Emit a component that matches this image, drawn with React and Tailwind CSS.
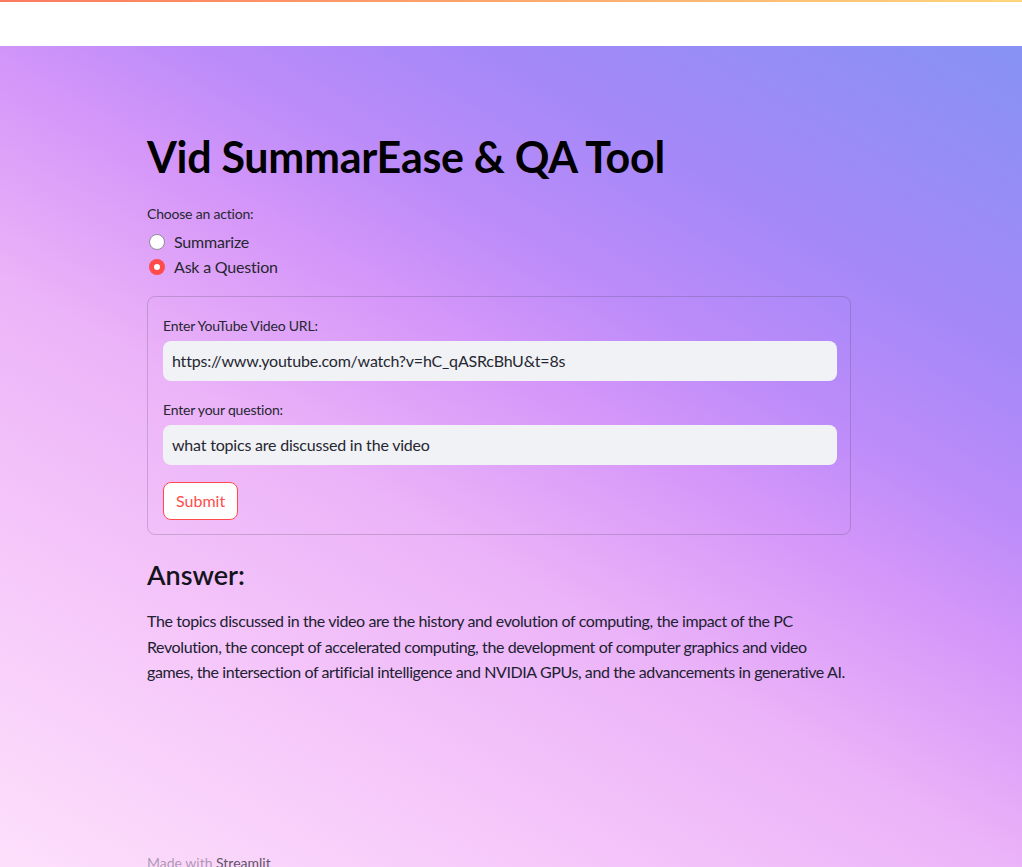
import React, { useState } from 'react';

const font = { fontFamily: 'Lato, "Noto Sans", sans-serif' };

const Radio = ({ label, checked, onSelect }) => (
  <label className="flex items-center gap-2 h-[25px] cursor-pointer" onClick={onSelect}>
    {checked ? (
      <span className="w-4 h-4 rounded-full bg-[#ff4b4b] flex items-center justify-center">
        <span className="w-[6px] h-[6px] rounded-full bg-white" />
      </span>
    ) : (
      <span className="w-4 h-4 rounded-full bg-white border border-[#8e8a9a]" />
    )}
    <span className="text-[16px] text-[#262730] ml-[1px] tracking-[-0.2px]">{label}</span>
  </label>
);

const TextField = ({ label, value }) => (
  <div className="flex flex-col">
    <div className="text-[14px] text-[#262730] h-[28px] flex items-center tracking-[-0.2px]">{label}</div>
    <div className="mt-[2px] h-[40px] rounded-lg bg-[#f0f2f6] flex items-center px-[9px] text-[16px] text-[#262730] tracking-[-0.2px]">
      {value}
    </div>
  </div>
);

const App = () => {
  const [action, setAction] = useState('qa');

  return (
    <div className="min-h-[867px] flex flex-col" style={font}>
      {/* Header */}
      <div className="h-[46px] bg-white flex flex-col shrink-0">
        <div className="h-[2px] bg-[linear-gradient(90deg,#fb7a5f,#fdd57c)]" />
      </div>

      {/* Main */}
      <div className="flex-1 h-[821px] overflow-hidden bg-[linear-gradient(30deg,#fde0fb_0%,#f6c9fa_22%,#ebb3f8_42%,#d496f9_57%,#bc8cf9_66%,#a588f8_78%,#8792f4_100%)]">
        <div className="w-[704px] ml-[147px] pt-[83px] flex flex-col">
          <h1 className="text-[43px] font-bold leading-[56px] text-black tracking-[-0.3px]">
            Vid SummarEase &amp; QA Tool
          </h1>

          <div className="mt-[16px] text-[14px] text-[#262730] h-[24px] flex items-center tracking-[-0.2px]">Choose an action:</div>
          <div className="mt-[4px] flex flex-col ml-[2px]">
            <Radio label="Summarize" checked={action === 'sum'} onSelect={() => setAction('sum')} />
            <Radio label="Ask a Question" checked={action === 'qa'} onSelect={() => setAction('qa')} />
          </div>

          {/* Form */}
          <div className="mt-[17px] h-[239px] border border-[rgba(49,51,63,0.2)] rounded-lg pl-[15px] pr-[13px] pt-[14px] flex flex-col">
            <TextField label="Enter YouTube Video URL:" value="https://www.youtube.com/watch?v=hC_qASRcBhU&t=8s" />
            <div className="mt-[14px]">
              <TextField label="Enter your question:" value="what topics are discussed in the video" />
            </div>
            <div className="mt-[17px]">
              <button className="h-[38px] px-[12px] rounded-lg bg-white border border-[#ff4b4b] text-[#ff4b4b] text-[16px]">
                Submit
              </button>
            </div>
          </div>

          {/* Answer */}
          <h3 className="mt-[22px] text-[27px] font-semibold leading-[36px] text-[#14141c]">Answer:</h3>
          <p className="mt-[15px] text-[16px] leading-[25.6px] text-[#202130] tracking-[-0.4px]">
            The topics discussed in the video are the history and evolution of computing, the impact of the PC
            Revolution, the concept of accelerated computing, the development of computer graphics and video
            games, the intersection of artificial intelligence and NVIDIA GPUs, and the advancements in generative AI.
          </p>

          <div className="mt-[168px] text-[14px] leading-[20px] text-[rgba(49,51,63,0.4)]">
            Made with <span className="text-[rgba(49,51,63,0.8)]">Streamlit</span>
          </div>
        </div>
      </div>
    </div>
  );
};

export default App;
